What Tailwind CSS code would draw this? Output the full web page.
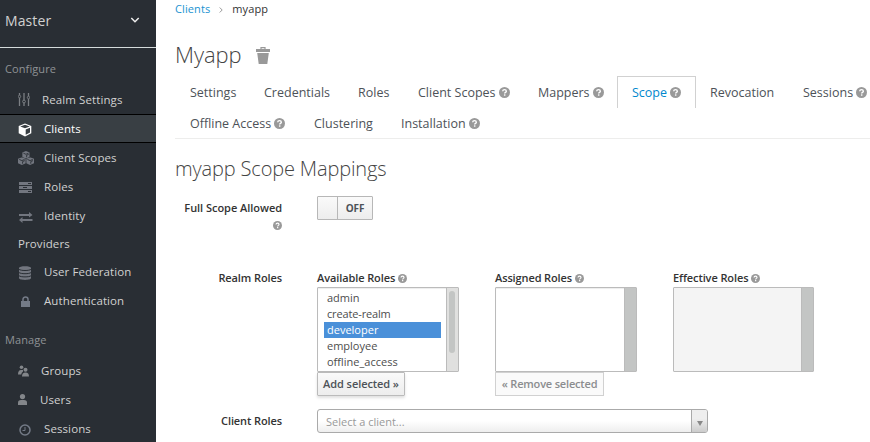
<!DOCTYPE html>
<html lang="en">
<head>
<meta charset="utf-8">
<title>Myapp</title>
<script src="https://cdn.jsdelivr.net/npm/@tailwindcss/browser@4"></script>
</head>
<body class="w-[870px] h-[442px] overflow-hidden bg-white font-['Open_Sans',sans-serif] text-[#4d5258]">
<svg class="hidden">
  <symbol id="help" viewBox="0 0 12 12"><circle cx="6" cy="6" r="6" fill="#999"/><path d="M4 4.700C4.100 3.400 5 2.900 6 2.900c1.200 0 2 .7 2 1.700C8 5.900 6.200 5.800 6.200 7.200" fill="none" stroke="#fff" stroke-width="1.500"/><path d="M5.400 8h1.600v1.500H5.400z" fill="#fff"/></symbol>
  <symbol id="cube" viewBox="0 0 14 14"><path fill="currentColor" fill-rule="evenodd" d="M7 .4l6.300 2.500v7.300L7 13.600.700 10.200V2.900zM7 1.700L2.300 3.500 7 5.300l4.700-1.800zM7.700 6.500v5.300l4.300-2.300V4.800z"/></symbol>
  <symbol id="blk" viewBox="0 0 8 8"><path fill="currentColor" d="M4 0l4 1.700v4.600L4 8 0 6.300V1.700z"/><path d="M1.300 2.300L4 3.500l2.700-1.200M4.700 6.700V4.500l2.300-1" fill="none" stroke="#292e34" stroke-width=".9"/></symbol>
</svg>
<div class="flex h-[442px]">
  <nav class="w-[156px] shrink-0 bg-[#292e34] text-[11.5px] text-[#d1d1d1] tracking-[.1px]">
    <div class="h-12 pl-[5px] pr-4 pb-[7px] border-b border-[#d5dbdb] flex items-center justify-between text-[14px]">
      <span>Master</span>
      <svg class="w-[10px] h-[8px]" viewBox="0 0 10 8"><path d="M1.300 2L5 5.700 8.700 2" fill="none" stroke="#eee" stroke-width="1.500"/></svg>
    </div>
    <div class="h-[37px] pl-[5px] pt-[5px] flex items-center text-[11px] text-[#8f9295]"><span>Configure</span></div>
    <div class="h-[29px] pl-[18px] pt-px flex items-center">
      <svg class="w-[12px] h-[13px] relative -top-px text-[#7b7f83]" viewBox="0 0 12 13"><path d="M1.500 0v2m0 3v8M6 0v7m0 3v3M10.500 0v3m0 3v7" fill="none" stroke="currentColor" stroke-width="1.300"/><g fill="none" stroke="currentColor"><circle cx="1.500" cy="3.500" r="1.200"/><circle cx="6" cy="8.500" r="1.400"/><circle cx="10.500" cy="4.500" r="1.200"/></g></svg>
      <span class="ml-3">Realm Settings</span>
    </div>
    <div class="h-[29px] pl-[18px] pt-px flex items-center bg-[#393f44] border-y border-black text-white">
      <svg class="w-[14px] h-[14px] relative top-px"><use href="#cube"/></svg><span class="ml-3">Clients</span>
    </div>
    <div class="h-[29px] pl-[18px] pt-px flex items-center">
      <svg class="w-[16px] h-[14px] text-[#72767f]" viewBox="0 0 16 14"><use href="#blk" x="4.200" y="0" width="7.500" height="7.500"/><use href="#blk" x="0" y="6.200" width="7.800" height="7.800"/><use href="#blk" x="8.200" y="6.200" width="7.800" height="7.800"/></svg>
      <span class="ml-[10px]">Client Scopes</span>
    </div>
    <div class="h-[29px] pl-[19px] pt-px flex items-center">
      <svg class="w-[13px] h-[11px] text-[#72767f]" viewBox="0 0 13 11"><path fill="currentColor" d="M0 0h13v3H0zM0 4h13v3H0zM0 8h13v3H0z"/><path d="M9 1.500h3M4 5.500h4M9 9.500h3" stroke="#292e34"/></svg>
      <span class="ml-3">Roles</span>
    </div>
    <div class="h-[29px] pl-[19px] pt-px flex items-center">
      <svg class="w-[14px] h-[11px] relative top-[1px] text-[#72767f]" viewBox="0 0 14 11"><path fill="currentColor" d="M0 2h10V0l3.500 3L10 5.500V4H0zM13.500 7H3.500V5L0 8l3.500 3V9h10z"/></svg>
      <span class="ml-[11px]">Identity</span>
    </div>
    <div class="h-[27px] pl-[18px] flex items-center">Providers</div>
    <div class="h-[29px] pl-[19px] pt-px flex items-center">
      <svg class="w-[12px] h-[14px] relative top-[1px]" viewBox="0 0 12 14"><path fill="#72767f" d="M0 2C0-.5 12-.5 12 2v10c0 2.500-12 2.500-12 0z"/><path d="M0 3.300c1.500 1.600 10.500 1.600 12 0M0 6.500c1.500 1.600 10.500 1.600 12 0M0 9.700c1.500 1.600 10.500 1.600 12 0" fill="none" stroke="#292e34"/></svg>
      <span class="ml-[13px]">User Federation</span>
    </div>
    <div class="h-[29px] pl-[21px] flex items-center">
      <svg class="w-[9px] h-[11px] relative top-px" viewBox="0 0 9 11"><path fill="#747b87" d="M0 5h9v6H0z"/><path d="M2 5.500V3.200C2 .1 7 .1 7 3.200v2.300" fill="none" stroke="#747b87" stroke-width="1.500"/></svg>
      <span class="ml-[14px]">Authentication</span>
    </div>
    <div class="h-[41px] pl-[5px] pt-[9px] flex items-center text-[11px] text-[#8f9295]"><span>Manage</span></div>
    <div class="h-[29px] pl-[18px] pt-px flex items-center">
      <svg class="w-[11px] h-[12px] text-[#83868a]" viewBox="0 0 11 12"><g fill="currentColor"><circle cx="3.500" cy="2.300" r="1.800"/><circle cx="7.500" cy="4.700" r="2"/><path d="M0 9.500Q0 5 3 5h2v1.500Q3.500 7.500 3.200 9.500zM4 11.500Q4 7.500 7.500 7.500T11 11.500z"/></g></svg>
      <span class="ml-3">Groups</span>
    </div>
    <div class="h-[29px] pl-[18px] pt-px flex items-center">
      <svg class="w-[9px] h-[11px] relative -top-px text-[#83868a]" viewBox="0 0 9 11"><g fill="currentColor"><circle cx="4.500" cy="2.600" r="2.600"/><path d="M0 11V8.500Q0 6 3 6h3q3 0 3 2.500V11z"/></g></svg>
      <span class="ml-[13px]">Users</span>
    </div>
    <div class="h-[27px] pl-[19px] pt-[2px] flex items-center">
      <svg class="w-[12px] h-[12px] relative top-px" viewBox="0 0 12 12"><circle cx="6" cy="6" r="5" fill="none" stroke="#747b87" stroke-width="1.500"/><path d="M6 3v3.500H3.500" fill="none" stroke="#747b87"/></svg>
      <span class="ml-[13px]">Sessions</span>
    </div>
  </nav>

  <main class="w-[714px] pl-[19px] overflow-hidden">
    <div class="h-[19px] flex items-center text-[11px] tracking-[.1px]">
      <span class="text-[#1b93d1]">Clients</span>
      <svg class="w-[4px] h-[6px] mx-[9px]" viewBox="0 0 4 6"><path d="M.7.500L3.200 3 .7 5.500" fill="none" stroke="#999"/></svg>
      <span class="text-[#333]">myapp</span>
    </div>
    <div class="h-[57px] pt-[13px] flex items-center">
      <h1 class="font-['Open_Sans_Light','Open_Sans',sans-serif] text-[22px] font-light tracking-[-.1px] text-[#444]">Myapp</h1>
      <svg class="w-[14px] h-[17px] ml-[15px] relative top-[1px]" viewBox="0 0 14 17"><path fill="#999" d="M0 2h14v3H0zM1.200 6h11.600l-1.500 11H2.700z"/><path d="M5 2.500V.7h4v1.800" fill="none" stroke="#999" stroke-width="1.200"/></svg>
    </div>
    <div class="h-[63px] border-b border-[#ededec] text-[12.5px] leading-[31px] whitespace-nowrap">
      <div class="flex h-8">
        <div class="w-[74px] shrink-0 pl-[15px] pt-px">Settings</div>
        <div class="w-[94px] shrink-0 pl-[15px] pt-px">Credentials</div>
        <div class="w-[60px] shrink-0 pl-[15px] pt-px">Roles</div>
        <div class="w-[120px] shrink-0 pl-[15px] pt-px flex items-center gap-[3px]">Client Scopes<svg class="w-[11px] h-[11px]"><use href="#help"/></svg></div>
        <div class="w-[94px] shrink-0 pl-[15px] pt-px flex items-center gap-[3px]">Mappers<svg class="w-[11px] h-[11px]"><use href="#help"/></svg></div>
        <div class="w-[79px] shrink-0 pl-[14px] flex items-center gap-[3px] border border-b-0 border-[#d1d1d1] text-[#0088ce]">Scope<svg class="w-[11px] h-[11px]"><use href="#help"/></svg></div>
        <div class="w-[92px] shrink-0 pl-[14px] pt-px">Revocation</div>
        <div class="w-[90px] shrink-0 pl-[15px] pt-px flex items-center gap-[3px]">Sessions<svg class="w-[11px] h-[11px]"><use href="#help"/></svg></div>
      </div>
      <div class="flex h-[30px]">
        <div class="w-[124px] pl-[15px] flex items-center gap-[3px]">Offline Access<svg class="w-[11px] h-[11px]"><use href="#help"/></svg></div>
        <div class="w-[87px] pl-[15px]">Clustering</div>
        <div class="pl-[15px] flex items-center gap-[3px]">Installation<svg class="w-[11px] h-[11px]"><use href="#help"/></svg></div>
      </div>
    </div>
    <h2 class="h-[57px] pt-[3px] flex items-center font-['Open_Sans_Light','Open_Sans',sans-serif] text-[20px] font-light tracking-[-.15px] text-[#444]">myapp Scope Mappings</h2>
    <div class="h-[75px] flex text-[11px] font-semibold text-[#333]">
      <div class="w-[107px] flex flex-col items-end pt-[3px] leading-[18px] tracking-[-.04px]"><span>Full Scope Allowed</span><svg class="w-[9px] h-[9px] mt-[4px]"><use href="#help"/></svg></div>
      <div class="ml-[35px] w-[56px] h-6 flex border border-[#b7b7b7] rounded-[1px] bg-linear-to-b from-[#fafafa] to-[#ededed]">
        <div class="w-5 border-r border-[#b7b7b7]"></div>
        <div class="flex-1 flex items-center justify-center text-[10px] font-bold tracking-[-.1px] text-[#4d5258]">OFF</div>
      </div>
    </div>
    <div class="h-[138px] flex text-[11px] text-[#333]">
      <div class="w-[107px] text-right font-semibold leading-[14px] tracking-[-.1px]">Realm Roles</div>
      <div class="ml-[35px] w-[142px]">
        <div class="h-4 flex items-center gap-[3px] font-semibold leading-[14px] tracking-[-.1px] pb-[2px]">Available Roles<svg class="w-[9px] h-[9px]"><use href="#help"/></svg></div>
        <div class="h-[85px] flex border border-[#bbb] rounded-[1px] shadow-[inset_0_1px_1px_#00000013] text-[#4d4d4d]">
          <div class="w-[123px] ml-[6px] pt-[2px] leading-4">
            <div class="w-[117px] pl-[3px]">admin</div>
            <div class="w-[117px] pl-[3px] tracking-[-.15px]">create-realm</div>
            <div class="w-[117px] pl-[3px] bg-[#4a90d9] text-white">developer</div>
            <div class="w-[117px] pl-[3px]">employee</div>
            <div class="w-[117px] pl-[3px]">offline_access</div>
          </div>
          <div class="flex-1 ml-[-1px] bg-[#e0e0df] border-l border-[#bbb] pt-[3px] pl-[2px]"><div class="w-[6px] h-[62px] rounded-full bg-[#c3c5c4]"></div></div>
        </div>
        <div class="w-[88px] h-6 flex items-center justify-center border border-[#bbb] rounded-[1px] bg-linear-to-b from-[#fafafa] to-[#ededed] shadow-[0_2px_3px_#00000020] font-semibold tracking-[-.08px] text-[#4d5258] whitespace-nowrap">Add selected »</div>
      </div>
      <div class="ml-[36px] w-[142px]">
        <div class="h-4 flex items-center gap-[3px] font-semibold leading-[14px] tracking-[-.12px] pb-[2px]">Assigned Roles<svg class="w-[9px] h-[9px]"><use href="#help"/></svg></div>
        <div class="h-[85px] flex justify-end border border-[#bbb] rounded-[1px] shadow-[inset_0_1px_1px_#00000013]"><div class="w-[12px] bg-[#c3c5c4] border-l border-[#bbb]"></div></div>
        <div class="w-[109px] h-6 flex items-center justify-center border border-[#d1d1d1] bg-[#fafafa] font-semibold tracking-[-.18px] text-[#8b8d8f] whitespace-nowrap">« Remove selected</div>
      </div>
      <div class="ml-[36px] w-[141px]">
        <div class="h-4 flex items-center gap-[3px] font-semibold leading-[14px] tracking-[-.1px] pb-[2px]">Effective Roles<svg class="w-[9px] h-[9px]"><use href="#help"/></svg></div>
        <div class="h-[85px] flex justify-end border border-[#bbb] rounded-[1px] bg-[#f4f4f4]"><div class="w-[12px] bg-[#c3c5c4] border-l border-[#bbb]"></div></div>
      </div>
    </div>
    <div class="flex items-center h-6 text-[11px]">
      <div class="w-[107px] text-right font-semibold tracking-[-.1px] text-[#333]">Client Roles</div>
      <div class="ml-[35px] w-[391px] h-6 flex border border-[#aaa] rounded-[3px] overflow-hidden bg-linear-to-t from-[#eee] to-white to-50%">
        <div class="flex-1 pl-2 pt-[2px] flex items-center text-[#999]">Select a client...</div>
        <div class="w-[16px] border-l border-[#aaa] bg-linear-to-t from-[#ccc] to-[#eee] to-60% flex items-center justify-center"><svg class="w-[6px] h-[5px] relative top-[2px]" viewBox="0 0 6 5"><path d="M0 0h6L3 5z" fill="#888"/></svg></div>
      </div>
    </div>
  </main>
</div>
</body>
</html>
